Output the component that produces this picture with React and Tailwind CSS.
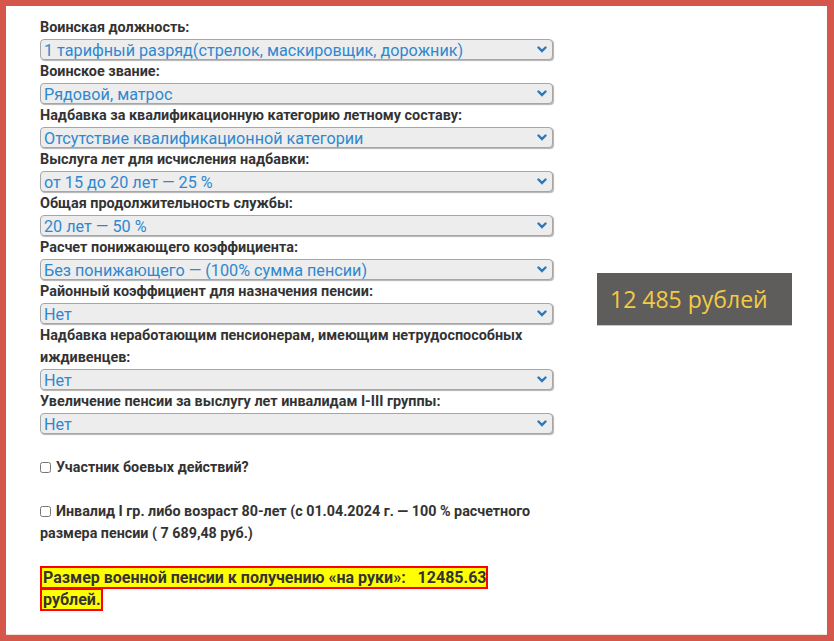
import React from 'react';

const fields = [
    { label: 'Воинская должность:', value: '1 тарифный разряд(стрелок, маскировщик, дорожник)' },
    { label: 'Воинское звание:', value: 'Рядовой, матрос' },
    { label: 'Надбавка за квалификационную категорию летному составу:', value: 'Отсутствие квалификационной категории' },
    { label: 'Выслуга лет для исчисления надбавки:', value: 'от 15 до 20 лет — 25 %' },
    { label: 'Общая продолжительность службы:', value: '20 лет — 50 %' },
    { label: 'Расчет понижающего коэффициента:', value: 'Без понижающего — (100% сумма пенсии)' },
    { label: 'Районный коэффициент для назначения пенсии:', value: 'Нет' },
    { label: 'Надбавка неработающим пенсионерам, имеющим нетрудоспособных иждивенцев:', value: 'Нет' },
    { label: 'Увеличение пенсии за выслугу лет инвалидам I-III группы:', value: 'Нет' },
];

const Field = ({ label, value }) => (
    <div>
        <div className="text-[14.4px] font-bold leading-[22px] text-[#333]">{label}</div>
        <div className="relative h-[22px]">
            <select
                defaultValue={value}
                className="block w-[513px] h-[21px] appearance-none rounded-[4px] border border-[#a6a6a6] bg-[#ededed] pl-[3px] pt-[1px] text-[16.2px] leading-[19px] text-[#2f88cf] shadow-[1px_1px_1px_rgba(0,0,0,0.3)] outline-none"
            >
                <option>{value}</option>
            </select>
            <svg
                className="absolute right-[7px] top-[7px] pointer-events-none"
                width="10"
                height="7"
                viewBox="0 0 10 7"
            >
                <path d="M1.5 1.5 L5 5 L8.5 1.5" fill="none" stroke="#2a78be" strokeWidth="2.4" strokeLinecap="round" />
            </svg>
        </div>
    </div>
);

export default function App() {
    return (
        <div
            className="w-[834px] h-[641px] overflow-hidden border-t-[6px] border-l-[6px] border-r-[7px] border-b-[6px] border-[#d5564a] bg-white text-[#333]"
            style={{ fontFamily: 'Roboto, "Noto Sans", sans-serif' }}
        >
            <div className="flex pl-[34px] pt-[11px] h-full shadow-[inset_0_-1px_0_#f3e3d6]">
                <div className="w-[514px]">
                    {fields.map((f) => (
                        <Field key={f.label} label={f.label} value={f.value} />
                    ))}

                    <label className="mt-[21px] flex items-center text-[14.3px] font-bold leading-[22px]">
                        <input type="checkbox" className="mr-[5px] h-[11px] w-[11px]" />
                        Участник боевых действий?
                    </label>

                    <label className="mt-[22px] block text-[14.3px] font-bold leading-[22px]">
                        <input type="checkbox" className="mr-[5px] h-[11px] w-[11px] align-[-1px]" />
                        Инвалид I гр. либо возраст 80-лет (с 01.04.2024 г. — 100 % расчетного размера пенсии ( 7 689,48 руб.)
                    </label>

                    <p className="mt-[23px] w-[460px] text-[16px] font-bold leading-[22px] text-[#333]">
                        <span className="border-2 border-[#ff0000] bg-[#ffff00] pl-[1px] box-decoration-clone">
                            Размер военной пенсии к получению «на руки»:&nbsp;&nbsp; 12485.63 рублей.
                        </span>
                    </p>
                </div>

                <div className="ml-[43px] mt-[256px]">
                    <div
                        className="flex h-[52px] w-[195px] items-center bg-[#5e5d5b] pl-[13px] text-[23px] text-[#f4cb45] shadow-[0_1px_0_#c8c8c8]"
                        style={{ fontFamily: '"Open Sans", "Noto Sans", sans-serif' }}
                    >
                        12 485 рублей
                    </div>
                </div>
            </div>
        </div>
    );
}
